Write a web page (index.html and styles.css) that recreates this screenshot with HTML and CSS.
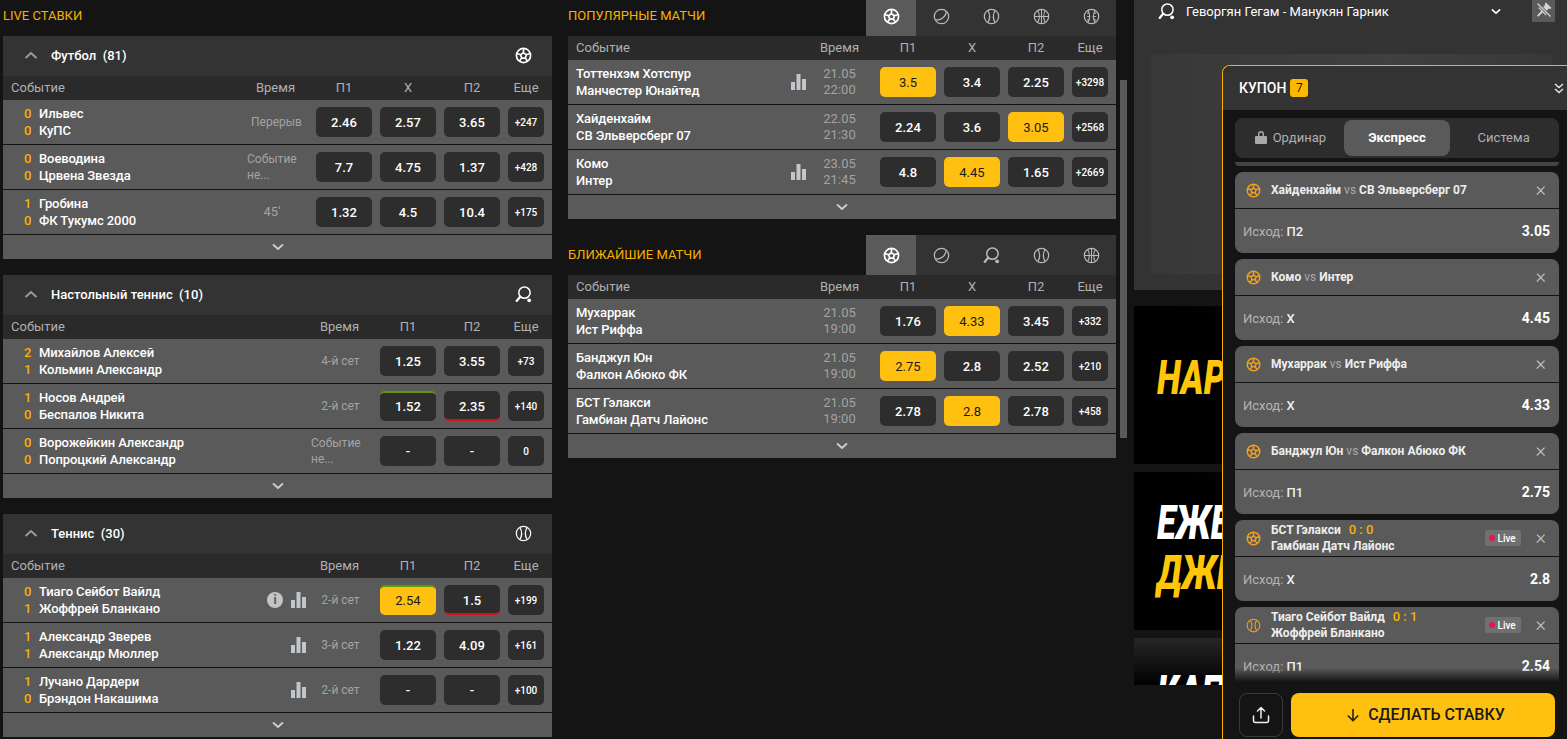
FILE: index.html
```html
<!DOCTYPE html>
<html lang="ru">
<head>
<meta charset="UTF-8">
<meta name="viewport" content="width=device-width, initial-scale=1.0">
<title>Ставки</title>
<link rel="stylesheet" href="styles.css">
</head>
<body>

<svg class="sprite" xmlns="http://www.w3.org/2000/svg">
    <symbol id="i-soccer" viewBox="0 0 18 18">
        <circle cx="9" cy="9" r="7.500" fill="none" stroke="currentColor" stroke-width="1.800"/>
        <path fill="none" stroke="currentColor" stroke-width="1.800" d="M9 6l3 2.200-1.100 3.500H7.100L6 8.200zM9 6V1.800M12 8.200l4-1.300M10.900 11.700l2.500 3.400M7.100 11.700l-2.500 3.400M6 8.200L2 6.900"/>
    </symbol>
    <symbol id="i-puck" viewBox="0 0 18 18">
        <circle cx="9" cy="9" r="7.600" fill="none" stroke="currentColor" stroke-width="1.300"/>
        <path fill="none" stroke="currentColor" stroke-width="1.300" d="M2.600 12.400C8 14 14.400 8.500 13.800 3.200"/>
    </symbol>
    <symbol id="i-tennis" viewBox="0 0 18 18">
        <circle cx="9" cy="9" r="7.600" fill="none" stroke="currentColor" stroke-width="1.300"/>
        <path fill="none" stroke="currentColor" stroke-width="1.300" d="M5.200 2.600C7.400 6.400 7.400 11.600 5.200 15.400M12.800 2.600C10.600 6.400 10.600 11.600 12.800 15.400"/>
    </symbol>
    <symbol id="i-basket" viewBox="0 0 18 18">
        <circle cx="9" cy="9" r="7.600" fill="none" stroke="currentColor" stroke-width="1.300"/>
        <path fill="none" stroke="currentColor" stroke-width="1.100" d="M9 1.400v15.200M1.400 9h15.200M5 2.600C7 6.400 7 11.600 5 15.400M13 2.600C11 6.400 11 11.600 13 15.400"/>
    </symbol>
    <symbol id="i-baseball" viewBox="0 0 18 18">
        <circle cx="9" cy="9" r="7.600" fill="none" stroke="currentColor" stroke-width="1.300"/>
        <path fill="none" stroke="currentColor" stroke-width="1.200" d="M5.200 2.600C7.400 6.400 7.400 11.600 5.200 15.400M12.800 2.600C10.600 6.400 10.600 11.600 12.800 15.400M4.200 5.600l2.200-.8M4.400 9h2.400M4.200 12.400l2.200.8M13.800 5.600l-2.200-.8M13.600 9h-2.400M13.800 12.400l-2.200.8"/>
    </symbol>
    <symbol id="i-racket" viewBox="0 0 18 18">
        <circle cx="10" cy="7" r="6" fill="none" stroke="currentColor" stroke-width="1.600"/>
        <path fill="none" stroke="currentColor" stroke-width="2.400" stroke-linecap="round" d="M5.400 11.400L1.800 15.800"/>
        <circle cx="15" cy="15.200" r="2" fill="currentColor"/>
    </symbol>
    <symbol id="i-stats" viewBox="0 0 15 16">
        <rect x="0" y="8" width="4" height="8"/>
        <rect x="5.500" y="0" width="4" height="16"/>
        <rect x="11" y="5" width="4" height="11"/>
    </symbol>
    <symbol id="i-up" viewBox="0 0 14 8">
        <path fill="none" stroke="currentColor" stroke-width="2" d="M1.500 7L7 2l5.500 5"/>
    </symbol>
    <symbol id="i-down" viewBox="0 0 12 8">
        <path fill="none" stroke="currentColor" stroke-width="1.800" d="M1 1.500l5 4.500 5-4.500"/>
    </symbol>
</svg>

<div class="page">

    <div class="col col-left">
        <div class="heading"><span class="heading-text">LIVE СТАВКИ</span></div>

        <div class="sec">
            <div class="sec-head">
                <svg class="sec-arrow"><use href="#i-up"/></svg>
                <span class="sec-title">Футбол&nbsp; (81)</span>
                <svg class="sec-icon"><use href="#i-soccer"/></svg>
            </div>
            <div class="row-head">
                <span class="h-name">Событие</span><span class="h-time">Время</span><span class="h-odd">П1</span><span class="h-odd">Х</span><span class="h-odd">П2</span><span class="h-more">Еще</span>
            </div>
            <div class="row">
                <div class="names"><div class="team"><b class="score">0</b>Ильвес</div><div class="team"><b class="score">0</b>КуПС</div></div>
                <div class="time">Перерыв</div>
                <div class="odd">2.46</div><div class="odd">2.57</div><div class="odd">3.65</div><div class="more">+247</div>
            </div>
            <div class="row">
                <div class="names"><div class="team"><b class="score">0</b>Воеводина</div><div class="team"><b class="score">0</b>Црвена Звезда</div></div>
                <div class="time time-left">Событие<br>не...</div>
                <div class="odd">7.7</div><div class="odd">4.75</div><div class="odd">1.37</div><div class="more">+428</div>
            </div>
            <div class="row">
                <div class="names"><div class="team"><b class="score">1</b>Гробина</div><div class="team"><b class="score">0</b>ФК Тукумс 2000</div></div>
                <div class="time time-min">45'</div>
                <div class="odd">1.32</div><div class="odd">4.5</div><div class="odd">10.4</div><div class="more">+175</div>
            </div>
            <div class="sec-foot"><svg class="foot-arrow"><use href="#i-down"/></svg></div>
        </div>

        <div class="sec">
            <div class="sec-head">
                <svg class="sec-arrow"><use href="#i-up"/></svg>
                <span class="sec-title">Настольный теннис&nbsp; (10)</span>
                <svg class="sec-icon"><use href="#i-racket"/></svg>
            </div>
            <div class="row-head">
                <span class="h-name">Событие</span><span class="h-time">Время</span><span class="h-odd">П1</span><span class="h-odd">П2</span><span class="h-more">Еще</span>
            </div>
            <div class="row">
                <div class="names"><div class="team"><b class="score">2</b>Михайлов Алексей</div><div class="team"><b class="score">1</b>Кольмин Александр</div></div>
                <div class="time">4-й сет</div>
                <div class="odd">1.25</div><div class="odd">3.55</div><div class="more">+73</div>
            </div>
            <div class="row">
                <div class="names"><div class="team"><b class="score">1</b>Носов Андрей</div><div class="team"><b class="score">0</b>Беспалов Никита</div></div>
                <div class="time">2-й сет</div>
                <div class="odd odd-up">1.52</div><div class="odd odd-down">2.35</div><div class="more">+140</div>
            </div>
            <div class="row">
                <div class="names"><div class="team"><b class="score">0</b>Ворожейкин Александр</div><div class="team"><b class="score">0</b>Попроцкий Александр</div></div>
                <div class="time time-left">Событие<br>не...</div>
                <div class="odd">-</div><div class="odd">-</div><div class="more">0</div>
            </div>
            <div class="sec-foot"><svg class="foot-arrow"><use href="#i-down"/></svg></div>
        </div>

        <div class="sec">
            <div class="sec-head">
                <svg class="sec-arrow"><use href="#i-up"/></svg>
                <span class="sec-title">Теннис&nbsp; (30)</span>
                <svg class="sec-icon"><use href="#i-tennis"/></svg>
            </div>
            <div class="row-head">
                <span class="h-name">Событие</span><span class="h-time">Время</span><span class="h-odd">П1</span><span class="h-odd">П2</span><span class="h-more">Еще</span>
            </div>
            <div class="row">
                <div class="names"><div class="team"><b class="score">0</b>Тиаго Сейбот Вайлд</div><div class="team"><b class="score">1</b>Жоффрей Бланкано</div></div>
                <span class="info">i</span><svg class="stats"><use href="#i-stats"/></svg>
                <div class="time">2-й сет</div>
                <div class="odd odd-sel odd-up">2.54</div><div class="odd odd-down">1.5</div><div class="more">+199</div>
            </div>
            <div class="row">
                <div class="names"><div class="team"><b class="score">1</b>Александр Зверев</div><div class="team"><b class="score">1</b>Александр Мюллер</div></div>
                <svg class="stats"><use href="#i-stats"/></svg>
                <div class="time">3-й сет</div>
                <div class="odd">1.22</div><div class="odd">4.09</div><div class="more">+161</div>
            </div>
            <div class="row">
                <div class="names"><div class="team"><b class="score">1</b>Лучано Дардери</div><div class="team"><b class="score">0</b>Брэндон Накашима</div></div>
                <svg class="stats"><use href="#i-stats"/></svg>
                <div class="time">2-й сет</div>
                <div class="odd">-</div><div class="odd">-</div><div class="more">+100</div>
            </div>
            <div class="sec-foot"><svg class="foot-arrow"><use href="#i-down"/></svg></div>
        </div>
    </div>

    <div class="col col-mid">
        <div class="heading">
            <span class="heading-text">ПОПУЛЯРНЫЕ МАТЧИ</span>
            <div class="sport-tabs">
                <span class="sport-tab sport-tab-on"><svg><use href="#i-soccer"/></svg></span>
                <span class="sport-tab"><svg><use href="#i-puck"/></svg></span>
                <span class="sport-tab"><svg><use href="#i-tennis"/></svg></span>
                <span class="sport-tab"><svg><use href="#i-basket"/></svg></span>
                <span class="sport-tab"><svg><use href="#i-baseball"/></svg></span>
            </div>
        </div>
        <div class="sec">
            <div class="row-head">
                <span class="h-name">Событие</span><span class="h-time">Время</span><span class="h-odd">П1</span><span class="h-odd">Х</span><span class="h-odd">П2</span><span class="h-more">Еще</span>
            </div>
            <div class="row">
                <div class="names"><div class="team">Тоттенхэм Хотспур</div><div class="team">Манчестер Юнайтед</div></div>
                <svg class="stats"><use href="#i-stats"/></svg>
                <div class="time time-date">21.05<br>22:00</div>
                <div class="odd odd-sel">3.5</div><div class="odd">3.4</div><div class="odd">2.25</div><div class="more">+3298</div>
            </div>
            <div class="row">
                <div class="names"><div class="team">Хайденхайм</div><div class="team">СВ Эльверсберг 07</div></div>
                <div class="time time-date">22.05<br>21:30</div>
                <div class="odd">2.24</div><div class="odd">3.6</div><div class="odd odd-sel">3.05</div><div class="more">+2568</div>
            </div>
            <div class="row">
                <div class="names"><div class="team">Комо</div><div class="team">Интер</div></div>
                <svg class="stats"><use href="#i-stats"/></svg>
                <div class="time time-date">23.05<br>21:45</div>
                <div class="odd">4.8</div><div class="odd odd-sel">4.45</div><div class="odd">1.65</div><div class="more">+2669</div>
            </div>
            <div class="sec-foot"><svg class="foot-arrow"><use href="#i-down"/></svg></div>
        </div>

        <div class="heading">
            <span class="heading-text">БЛИЖАЙШИЕ МАТЧИ</span>
            <div class="sport-tabs">
                <span class="sport-tab sport-tab-on"><svg><use href="#i-soccer"/></svg></span>
                <span class="sport-tab"><svg><use href="#i-puck"/></svg></span>
                <span class="sport-tab"><svg><use href="#i-racket"/></svg></span>
                <span class="sport-tab"><svg><use href="#i-tennis"/></svg></span>
                <span class="sport-tab"><svg><use href="#i-basket"/></svg></span>
            </div>
        </div>
        <div class="sec">
            <div class="row-head">
                <span class="h-name">Событие</span><span class="h-time">Время</span><span class="h-odd">П1</span><span class="h-odd">Х</span><span class="h-odd">П2</span><span class="h-more">Еще</span>
            </div>
            <div class="row">
                <div class="names"><div class="team">Мухаррак</div><div class="team">Ист Риффа</div></div>
                <div class="time time-date">21.05<br>19:00</div>
                <div class="odd">1.76</div><div class="odd odd-sel">4.33</div><div class="odd">3.45</div><div class="more">+332</div>
            </div>
            <div class="row">
                <div class="names"><div class="team">Банджул Юн</div><div class="team">Фалкон Абюко ФК</div></div>
                <div class="time time-date">21.05<br>19:00</div>
                <div class="odd odd-sel">2.75</div><div class="odd">2.8</div><div class="odd">2.52</div><div class="more">+210</div>
            </div>
            <div class="row">
                <div class="names"><div class="team">БСТ Гэлакси</div><div class="team">Гамбиан Датч Лайонс</div></div>
                <div class="time time-date">21.05<br>19:00</div>
                <div class="odd">2.78</div><div class="odd odd-sel">2.8</div><div class="odd">2.78</div><div class="more">+458</div>
            </div>
            <div class="sec-foot"><svg class="foot-arrow"><use href="#i-down"/></svg></div>
        </div>
    </div>

    <div class="scrollbar"></div>

    <div class="side">
        <div class="stream">
            <div class="stream-bar">
                <svg class="stream-icon"><use href="#i-racket"/></svg>
                <span class="stream-title">Геворгян Гегам - Манукян Гарник</span>
                <svg class="stream-arrow"><use href="#i-down"/></svg>
                <span class="pin">
                    <svg viewBox="0 0 18 18" width="18" height="18"><path fill="#d4d4d4" d="M11 1.500l5.500 5.500-1.500 1-1.200-.4-2.300 2.300.5 3.300-1.300 1.200-3-3-4.500 4.300-1.200-1.200 4.300-4.500-3-3 1.200-1.300 3.300.5 2.300-2.300-.4-1.200z"/><path stroke="#5a5a5a" stroke-width="3" d="M2.500 2.500l13 13"/><path stroke="#d4d4d4" stroke-width="1.300" d="M2.500 2.500l13 13"/></svg>
                </span>
            </div>
            <div class="stream-frame"></div>
        </div>
        <div class="banner banner-one"><div class="banner-text banner-gold">НАР</div></div>
        <div class="banner banner-two">
            <div class="banner-text">ЕЖЕ</div>
            <div class="banner-text banner-gold">ДЖЕ</div>
        </div>
        <div class="banner banner-three"><div class="banner-text">КАП</div></div>

        <div class="coupon">
            <div class="coupon-head">
                <span class="coupon-title">КУПОН</span><span class="badge">7</span>
                <svg class="coupon-fold" viewBox="0 0 10 11" width="10" height="11"><path fill="none" stroke="#e6e6e6" stroke-width="1.500" d="M1 1l4 3.500L9 1M1 6l4 3.500L9 6"/></svg>
            </div>
            <div class="bet-tabs">
                <span class="bet-tab bet-tab-first">
                    <svg viewBox="0 0 12 14" width="12" height="14"><path fill="#a8a8a8" d="M1 6h10a1 1 0 0 1 1 1v6a1 1 0 0 1-1 1H1a1 1 0 0 1-1-1V7a1 1 0 0 1 1-1zM3 6V4a3 3 0 0 1 6 0v2H7.600V4a1.600 1.600 0 0 0-3.200 0v2z"/></svg>
                    Ординар
                </span>
                <span class="bet-tab bet-tab-on">Экспресс</span>
                <span class="bet-tab">Система</span>
            </div>
            <div class="bets">
                <div class="bet-stub"></div>

                <div class="bet">
                    <div class="bet-head">
                        <svg class="bet-icon"><use href="#i-soccer"/></svg>
                        <div class="bet-title">Хайденхайм <i class="vs">vs</i> СВ Эльверсберг 07</div>
                        <span class="bet-close">&times;</span>
                    </div>
                    <div class="bet-body"><span class="bet-out">Исход: <em>П2</em></span><b class="bet-odd">3.05</b></div>
                </div>
                <div class="bet">
                    <div class="bet-head">
                        <svg class="bet-icon"><use href="#i-soccer"/></svg>
                        <div class="bet-title">Комо <i class="vs">vs</i> Интер</div>
                        <span class="bet-close">&times;</span>
                    </div>
                    <div class="bet-body"><span class="bet-out">Исход: <em>Х</em></span><b class="bet-odd">4.45</b></div>
                </div>
                <div class="bet">
                    <div class="bet-head">
                        <svg class="bet-icon"><use href="#i-soccer"/></svg>
                        <div class="bet-title">Мухаррак <i class="vs">vs</i> Ист Риффа</div>
                        <span class="bet-close">&times;</span>
                    </div>
                    <div class="bet-body"><span class="bet-out">Исход: <em>Х</em></span><b class="bet-odd">4.33</b></div>
                </div>
                <div class="bet">
                    <div class="bet-head">
                        <svg class="bet-icon"><use href="#i-soccer"/></svg>
                        <div class="bet-title">Банджул Юн <i class="vs">vs</i> Фалкон Абюко ФК</div>
                        <span class="bet-close">&times;</span>
                    </div>
                    <div class="bet-body"><span class="bet-out">Исход: <em>П1</em></span><b class="bet-odd">2.75</b></div>
                </div>
                <div class="bet">
                    <div class="bet-head">
                        <svg class="bet-icon"><use href="#i-soccer"/></svg>
                        <div class="bet-title">БСТ Гэлакси <span class="bet-score">0 : 0</span><br>Гамбиан Датч Лайонс</div>
                        <span class="live"><i class="live-dot"></i>Live</span>
                        <span class="bet-close">&times;</span>
                    </div>
                    <div class="bet-body"><span class="bet-out">Исход: <em>Х</em></span><b class="bet-odd">2.8</b></div>
                </div>
                <div class="bet">
                    <div class="bet-head">
                        <svg class="bet-icon"><use href="#i-tennis"/></svg>
                        <div class="bet-title">Тиаго Сейбот Вайлд <span class="bet-score">0 : 1</span><br>Жоффрей Бланкано</div>
                        <span class="live"><i class="live-dot"></i>Live</span>
                        <span class="bet-close">&times;</span>
                    </div>
                    <div class="bet-body"><span class="bet-out">Исход: <em>П1</em></span><b class="bet-odd">2.54</b></div>
                </div>
            </div>
            <div class="coupon-foot">
                <span class="share">
                    <svg viewBox="0 0 18 18" width="18" height="18"><path fill="none" stroke="#eee" stroke-width="1.500" stroke-linecap="round" stroke-linejoin="round" d="M1.500 10v4.500a2 2 0 0 0 2 2h11a2 2 0 0 0 2-2V10M9 12V2M5.500 5L9 1.500 12.500 5"/></svg>
                </span>
                <span class="place-bet">
                    <svg viewBox="0 0 14 14" width="14" height="14"><path fill="none" stroke="#1a1a1a" stroke-width="1.500" d="M7 1v11.500M1.800 7.500L7 12.700l5.200-5.200"/></svg>
                    СДЕЛАТЬ СТАВКУ
                </span>
            </div>
        </div>
    </div>

</div>

</body>
</html>
```

FILE: styles.css
```css
html, body {
    margin: 0;
    padding: 0;
    height: 739px;
    overflow: hidden;
    background-color: #141414;
    font-family: Roboto, "Liberation Sans", sans-serif;
    font-size: 13px;
    color: #fff;
}
.sprite {
    display: none;
}
.page {
    display: flex;
    align-items: flex-start;
    gap: 16px;
    padding-left: 3px;
    margin-top: -4px; /* the page is scrolled a little */
}
.col {
    flex: none;
}
.col-left {
    width: 549px;
}
.col-mid {
    width: 548px;
}

/* headings */
.heading {
    display: flex;
    align-items: center;
    justify-content: space-between;
    height: 40px;
}
.heading-text {
    color: #f9b000;
    font-size: 13px;
    padding-bottom: 2px;
}
.sport-tabs {
    display: flex;
    align-self: stretch;
    background-color: #333;
}
.sport-tab {
    display: flex;
    align-items: center;
    justify-content: center;
    width: 50px;
    color: #b4bcc2;
}
.sport-tab svg {
    width: 17px;
    height: 17px;
}
.sport-tab-on {
    background-color: #5a5a5a;
    color: #fff;
}

/* tables */
.sec {
    margin-bottom: 16px;
}
.sec-head {
    display: flex;
    align-items: center;
    box-sizing: border-box;
    height: 40px;
    padding: 0 20px 2px 21px;
    background-color: #333;
}
.sec-arrow {
    width: 14px;
    height: 8px;
    color: #9a9a9a;
    margin-right: 13px;
}
.sec-title {
    flex: 1;
    font-weight: 500;
}
.sec-icon {
    width: 17px;
    height: 17px;
}
.row-head {
    display: flex;
    align-items: center;
    gap: 8px;
    box-sizing: border-box;
    height: 24px;
    padding: 0 8px 2px;
    background-color: #2a2a2a;
    color: #b0b0b0;
}
.h-name {
    flex: 1;
}
.h-time {
    box-sizing: border-box;
    width: 60px;
    padding-right: 5px;
    text-align: center;
}
.h-odd {
    width: 56px;
    text-align: center;
}
.h-more {
    width: 36px;
    text-align: center;
}
.row {
    display: flex;
    align-items: center;
    gap: 8px;
    height: 44px;
    padding: 0 8px;
    background-color: #5a5a5a;
    border-bottom: 1px solid #141414;
}
.names {
    flex: 1;
    font-weight: 500;
    letter-spacing: -.1px;
    line-height: 17px;
}
.score {
    display: inline-block;
    width: 15px;
    margin: 0 0 0 13px;
    color: #f9b000;
    font-weight: 500;
}
.time {
    box-sizing: border-box;
    width: 60px;
    padding-right: 3px;
    color: #a3a3a3;
    font-size: 12px;
    line-height: 16px;
    text-align: center;
}
.time-left {
    margin: 0 1px 0 -1px;
    padding-right: 0;
    text-align: left;
}
.time-min {
    padding-right: 12px;
    font-size: 13px;
}
.time-date {
    padding-right: 5px;
    font-size: 13px;
}
.stats {
    width: 15px;
    height: 16px;
    fill: #c0c6cc;
    margin-right: -2px;
}
.info {
    width: 16px;
    height: 16px;
    border-radius: 50%;
    background-color: #c4c4c4;
    color: #555;
    font-size: 12px;
    font-weight: 700;
    line-height: 16px;
    text-align: center;
}
.odd, .more {
    display: flex;
    align-items: center;
    justify-content: center;
    box-sizing: border-box;
    height: 30px;
    border-radius: 5px;
    background-color: #2d2d2d;
    font-weight: 500;
}
.odd {
    width: 56px;
}
.more {
    width: 36px;
    font-size: 10px;
}
.odd-sel {
    background-color: #ffc010;
    color: #1a1a1a;
    font-weight: 400;
}
.odd-up {
    border-top: 2px solid #5f9a00;
    padding-bottom: 2px;
}
.odd-down {
    border-bottom: 2px solid #d8101a;
    padding-top: 2px;
}
.sec-foot {
    display: flex;
    align-items: center;
    justify-content: center;
    height: 24px;
    background-color: #5a5a5a;
}
.foot-arrow {
    width: 12px;
    height: 8px;
    color: #d0d0d0;
}

.scrollbar {
    flex: none;
    width: 7px;
    height: 358px;
    margin: 84px -9px 0 -12px;
    background-color: #5a5a5a;
}

/* right side */
.side {
    position: relative;
    flex: 1;
    height: 743px;
}
.stream {
    background-color: #333;
    padding-bottom: 16px;
}
.stream-bar {
    display: flex;
    align-items: center;
    height: 30px;
    padding: 0 12px 0 24px;
}
.stream-icon {
    width: 17px;
    height: 17px;
    margin-right: 11px;
}
.stream-title {
    flex: 1;
}
.stream-arrow {
    width: 10px;
    height: 7px;
    margin-right: 31px;
}
.pin {
    display: flex;
    align-items: center;
    justify-content: center;
    width: 23px;
    height: 24px;
    margin-top: -2px;
    background-color: #5a5a5a;
}
.stream-frame {
    height: 220px;
    margin: 28px 15px 0 16px;
    background: linear-gradient(90deg, #383838, #404040 60%, #383838);
}
.banner {
    box-sizing: border-box;
    height: 158px;
    margin-bottom: 8px;
    overflow: hidden;
    background: linear-gradient(20deg, #000 55%, #262626);
}
.banner-one {
    margin-top: 16px;
    padding: 47px 0 0 23px;
}
.banner-two {
    padding: 26px 0 0 23px;
}
.banner-three {
    height: 47px;
    padding: 30px 0 0 23px;
    background: linear-gradient(180deg, #262626, #000);
}
.banner-text {
    font-family: Roboto, "Liberation Sans", sans-serif;
    font-size: 48px;
    font-weight: 900;
    font-style: italic;
    line-height: 50px;
    color: #fff;
    transform: scaleX(.72);
    transform-origin: left top;
}
.banner-gold {
    color: #ffc60a;
}

/* coupon lies over the banners */
.coupon {
    position: absolute;
    left: 88px;
    right: 0;
    top: 69px;
    bottom: 0;
    display: flex;
    flex-direction: column;
    box-sizing: border-box;
    border-top: 1px solid #f9b000;
    border-left: 1px solid #f9b000;
    border-top-left-radius: 8px;
    background-color: #141414;
}
.coupon-head {
    display: flex;
    align-items: center;
    flex: none;
    height: 44px;
    padding: 0 3px 0 16px;
    background-color: #333;
    border-top-left-radius: 8px;
}
.coupon-title {
    font-size: 14px;
    font-weight: 500;
}
.badge {
    width: 18px;
    height: 18px;
    margin-left: 4px;
    border-radius: 3px;
    background-color: #ffb800;
    color: #1a1a1a;
    font-size: 12px;
    line-height: 18px;
    text-align: center;
}
.coupon-fold {
    margin-left: auto;
}
.bet-tabs {
    display: flex;
    align-items: center;
    flex: none;
    height: 40px;
    margin: 8px 8px 4px 12px;
    padding: 0 2px;
    border-radius: 8px;
    background-color: #2d2d2d;
    color: #b0b0b0;
}
.bet-tab {
    display: flex;
    align-items: center;
    justify-content: center;
    gap: 6px;
    flex: 1;
    box-sizing: border-box;
    height: 36px;
    padding-bottom: 2px;
    border-radius: 8px;
}
.bet-tab-on {
    background-color: #5a5a5a;
    color: #fff;
    font-weight: 700;
}
.bets {
    position: relative;
    flex: 1;
    overflow: hidden;
    margin: 0 8px 0 12px;
}
.bets::after {
    content: "";
    position: absolute;
    left: 0;
    right: 0;
    bottom: 0;
    height: 14px;
    background: linear-gradient(180deg, rgba(20,20,20,0), #141414);
}
.bet-stub {
    height: 4px;
    margin-bottom: 6px;
    border-radius: 0 0 6px 6px;
    background-color: #444;
}
.bet {
    margin-bottom: 6px;
    border-radius: 8px;
    background-color: #5a5a5a;
}
.bet-head {
    display: flex;
    align-items: center;
    height: 36px;
    padding: 0 13px 0 11px;
    border-bottom: 1px solid #141414;
}
.bet-icon {
    flex: none;
    width: 15px;
    height: 15px;
    margin-right: 10px;
    color: #f0a020;
}
.bet-title {
    flex: 1;
    font-size: 12px;
    font-weight: 700;
    line-height: 16px;
    color: #eee;
}
.vs {
    color: #aaa;
    font-style: normal;
    font-weight: 400;
}
.bet-score {
    margin-left: 5px;
    color: #f9b000;
    font-size: 13px;
    font-weight: 500;
}
.bet-close {
    padding-bottom: 2px;
    color: #c4c4c4;
    font-size: 20px;
    font-weight: 300;
    line-height: 16px;
}
.live {
    display: flex;
    align-items: center;
    gap: 3px;
    box-sizing: border-box;
    width: 36px;
    height: 16px;
    margin-right: 15px;
    padding-left: 4px;
    border-radius: 2px;
    background-color: #707070;
    font-size: 10px;
    font-weight: 500;
}
.live-dot {
    width: 6px;
    height: 6px;
    border-radius: 50%;
    background-color: #f0104a;
}
.bet-body {
    display: flex;
    align-items: center;
    justify-content: space-between;
    height: 44px;
    padding: 0 9px 0 8px;
}
.bet-out {
    color: #b4b4b4;
}
.bet-out em {
    color: #eee;
    font-style: normal;
    font-weight: 500;
}
.bet-odd {
    font-size: 14px;
    font-weight: 700;
}
.coupon-foot {
    display: flex;
    flex: none;
    gap: 8px;
    padding: 11px 12px 2px 16px;
}
.share {
    display: flex;
    align-items: center;
    justify-content: center;
    box-sizing: border-box;
    width: 44px;
    height: 44px;
    border: 1px solid #3a3a3a;
    border-radius: 8px;
}
.place-bet {
    display: flex;
    align-items: center;
    justify-content: center;
    gap: 8px;
    flex: 1;
    box-sizing: border-box;
    height: 44px;
    padding: 0 0 1px 5px;
    border-radius: 8px;
    background-color: #ffc010;
    color: #1a1a1a;
    font-size: 16px;
    font-weight: 500;
}
```
